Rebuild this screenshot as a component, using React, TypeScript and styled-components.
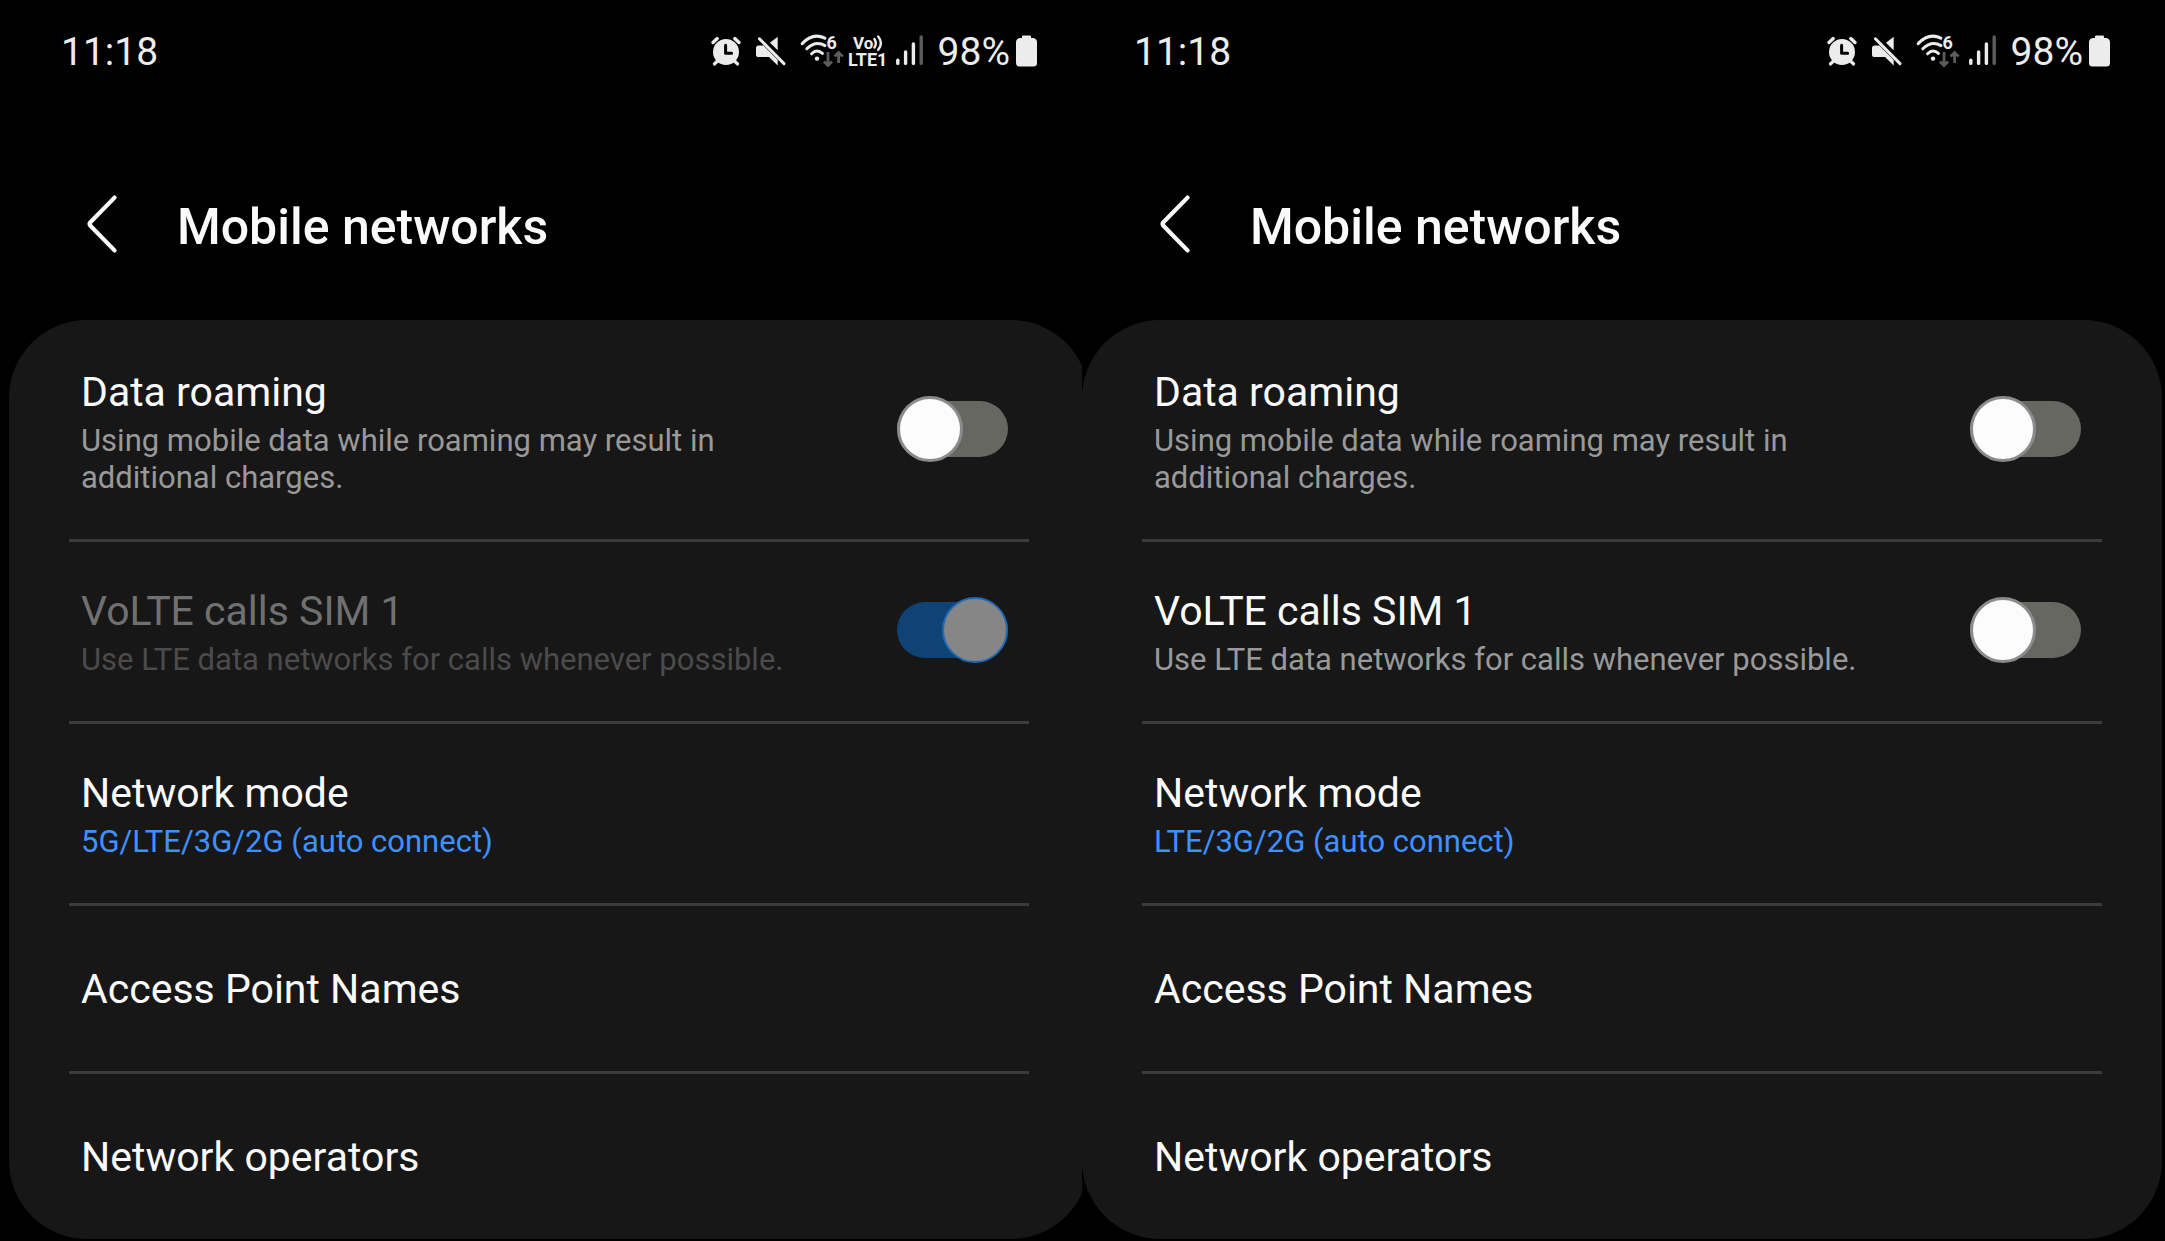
import React, { useId, useState } from "react";
import styled, { createGlobalStyle, css } from "styled-components";

const GlobalStyle = createGlobalStyle`
  *, *::before, *::after { box-sizing: border-box; }
  body { margin: 0; background: #000; }
`;

const Page = styled.div`
  display: flex;
  padding: 0 3px 2px 9px;
  background: #000;
  color: #fafafa;
  font-family: Roboto, "Liberation Sans", sans-serif;
`;

const PhoneFrame = styled.main`
  flex: 1 1 0;
  min-width: 0;
  background: #000;

  & + & {
    margin-left: -7px;
  }
`;

const StatusBar = styled.header`
  display: flex;
  align-items: center;
  justify-content: space-between;
  height: 102px;
  padding: 0 52px;
  color: #ececec;
  font-size: 39px;
  line-height: 48px;
`;

const Clock = styled.time`
  padding-top: 2px;
`;

const StatusIcons = styled.div`
  display: flex;
  align-items: center;

  svg {
    display: block;
    overflow: visible;
  }
`;

const IconSlot = styled.span<{ $gap: number }>`
  margin-right: ${(p) => p.$gap}px;
`;

const BatteryLevel = styled.span`
  padding-top: 2px;
  margin-right: 6px;
`;

const TitleBar = styled.div`
  display: flex;
  align-items: center;
  height: 218px;
  padding: 25px 72px 0;
`;

const BackButton = styled.button`
  display: flex;
  justify-content: center;
  width: 42px;
  margin-right: 54px;
  padding: 0;
  border: 0;
  background: none;
  color: inherit;
  cursor: pointer;
`;

const Title = styled.h1`
  margin: 0;
  padding-top: 6px;
  font-size: 50px;
  font-weight: 500;
  line-height: 60px;
`;

const Card = styled.ul`
  margin: 0;
  padding: 3px 60px 0;
  list-style: none;
  background: #171717;
  border-radius: 78px;
`;

const Item = styled.li`
  & + & {
    border-top: 3px solid #3b3b3b;
  }
`;

const rowStyle = css`
  display: flex;
  align-items: center;
  justify-content: space-between;
  width: 100%;
  padding: 39px 21px 43px 12px;
  text-align: left;
`;

const ToggleLabel = styled.label`
  ${rowStyle}
`;

const LinkRow = styled.button<{ $single?: boolean }>`
  ${rowStyle}
  ${(p) => p.$single && "padding-top: 53px; padding-bottom: 52px;"}
  border: 0;
  background: none;
  color: inherit;
  font-family: inherit;
  cursor: pointer;
`;

const Texts = styled.span`
  display: block;
  max-width: 740px;
`;

const ItemTitle = styled.span<{ $dim?: boolean }>`
  display: block;
  color: ${(p) => (p.$dim ? "#707070" : "#fafafa")};
  font-size: 41px;
  line-height: 60px;
`;

const ItemNote = styled.span<{ $tone?: "dim" | "accent" }>`
  display: block;
  color: ${(p) => (p.$tone === "accent" ? "#3e91ff" : p.$tone === "dim" ? "#4b4b4b" : "#999")};
  font-size: 31px;
  line-height: 37px;
`;

const Switch = styled.input`
  appearance: none;
  position: relative;
  flex: none;
  width: 111px;
  height: 66px;
  margin: 0;

  &::before {
    content: "";
    position: absolute;
    inset: 5px 0;
    border-radius: 28px;
    background: #666760;
  }

  &::after {
    content: "";
    position: absolute;
    top: 0;
    left: 0;
    width: 66px;
    height: 66px;
    border: 3px solid #8b8b8b;
    border-radius: 50%;
    background: #fcfcfc;
  }

  &:checked::before { background: #0381fe; }
  &:checked::after { left: 45px; border-color: #0381fe; }

  &:disabled::before { background: #0f4376; }
  &:disabled::after { border: 2px solid #2069b5; background: #868686; }
`;

const AlarmIcon = () => (
  <svg width="30" height="30" viewBox="0 0 30 30" aria-label="Alarm" role="img">
    <circle cx="15" cy="16" r="13" fill="currentColor" />
    <path d="M2 6.5 6.2 2.6M28 6.5 23.8 2.6" stroke="currentColor" strokeWidth="3.4" strokeLinecap="round" />
    <path d="M6.5 25 3.4 28M23.5 25 26.6 28" stroke="currentColor" strokeWidth="3.2" strokeLinecap="round" />
    <path d="M14.6 9.3v8h6" fill="none" stroke="#000" strokeWidth="3" strokeLinecap="round" strokeLinejoin="round" />
  </svg>
);

const MuteIcon = () => (
  <svg width="30" height="30" viewBox="0 0 30 30" aria-label="Muted" role="img">
    <path d="M2.6 9.6H7.4L21.7 24v5.4L13 21H2.6Q0 21 0 18.4v-6.2Q0 9.6 2.6 9.6Z" fill="currentColor" />
    <path d="M21.7 .8v13.4L14 6.8Z" fill="currentColor" />
    <path d="M3.4 2.8 28 27.6" stroke="currentColor" strokeWidth="3" strokeLinecap="round" />
  </svg>
);

const WifiIcon = () => (
  <svg width="44" height="34" viewBox="0 0 44 34" aria-label="Wi-Fi 6" role="img">
    <g fill="none" stroke="currentColor" strokeWidth="3" strokeLinecap="round">
      <path d="M2.2 9.6Q13-1.8 24.8 4.2" />
      <path d="M6.8 14.8Q15.6 6 25 11.6" />
      <path d="M11.6 19.8Q17 14.4 22.4 19.4" />
    </g>
    <circle cx="17" cy="24.6" r="2.2" fill="currentColor" />
    <text x="26.4" y="15" fontSize="18" fontWeight="700" fill="currentColor">6</text>
    <path d="M28 18v13M24 27.6l4 4 4-4M38.6 29V18.6M34.6 22.4l4-4 4 4" fill="none" stroke="#5c5c5c" strokeWidth="2.8" />
  </svg>
);

const VolteIcon = () => (
  <svg width="38" height="34" viewBox="0 0 38 34" aria-label="VoLTE 1" role="img">
    <text x="4" y="15" fontSize="17" fontWeight="700" fill="currentColor">Vo</text>
    <path d="M25.4 5Q28.2 9.2 25.4 13.6M29.2 2.4Q34.6 8.8 29.2 15.8" fill="none" stroke="currentColor" strokeWidth="2.4" strokeLinecap="round" />
    <text x="-1" y="32" fontSize="18" fontWeight="700" fill="currentColor">LTE1</text>
  </svg>
);

const SignalIcon = () => (
  <svg width="27" height="34" viewBox="0 0 27 34" aria-label="Signal" role="img">
    <g fill="none" stroke="currentColor" strokeWidth="3.4" strokeLinecap="round">
      <path d="M1.8 26.2v3.2" />
      <path d="M9.6 18v11.4" />
      <path d="M17.4 10v19.4" />
      <path d="M25.2 3v26.4" stroke="#5c5c5c" />
    </g>
  </svg>
);

const BatteryIcon = () => (
  <svg width="21" height="32" viewBox="0 0 21 32" aria-label="Battery" role="img">
    <path d="M6 3V1.6Q6 .4 7.2 .4h6.6Q15 .4 15 1.6V3h2.6Q21 4 21 7v21q0 3.6-3.6 3.6H3.6Q0 31.6 0 28V7Q0 4 3.4 3Z" fill="currentColor" />
  </svg>
);

const BackIcon = () => (
  <svg width="30" height="58" viewBox="0 0 30 58" aria-hidden="true">
    <path d="M27.5 2.6 3.4 27.2Q1.8 29 3.4 30.8L27.5 55.4" fill="none" stroke="currentColor" strokeWidth="4.2" strokeLinecap="round" />
  </svg>
);

type ToggleProps = { title: string; note: string; on?: boolean; disabled?: boolean };

function ToggleItem({ title, note, on = false, disabled = false }: ToggleProps) {
  const id = useId();
  const [checked, setChecked] = useState(on);
  return (
    <Item>
      <ToggleLabel htmlFor={id}>
        <Texts>
          <ItemTitle $dim={disabled}>{title}</ItemTitle>
          <ItemNote $tone={disabled ? "dim" : undefined}>{note}</ItemNote>
        </Texts>
        <Switch
          id={id}
          type="checkbox"
          role="switch"
          checked={checked}
          disabled={disabled}
          onChange={(e) => setChecked(e.target.checked)}
        />
      </ToggleLabel>
    </Item>
  );
}

type PhoneProps = { mode: string; volte: boolean };

function Phone({ mode, volte }: PhoneProps) {
  return (
    <PhoneFrame>
      <StatusBar>
        <Clock>11:18</Clock>
        <StatusIcons>
          <IconSlot $gap={15}><AlarmIcon /></IconSlot>
          <IconSlot $gap={14}><MuteIcon /></IconSlot>
          <IconSlot $gap={volte ? 5 : 9}><WifiIcon /></IconSlot>
          {volte && <IconSlot $gap={9}><VolteIcon /></IconSlot>}
          <IconSlot $gap={15}><SignalIcon /></IconSlot>
          <BatteryLevel>98%</BatteryLevel>
          <BatteryIcon />
        </StatusIcons>
      </StatusBar>
      <TitleBar>
        <BackButton type="button" aria-label="Back"><BackIcon /></BackButton>
        <Title>Mobile networks</Title>
      </TitleBar>
      <Card>
        <ToggleItem
          title="Data roaming"
          note="Using mobile data while roaming may result in additional charges."
        />
        <ToggleItem
          title="VoLTE calls SIM 1"
          note="Use LTE data networks for calls whenever possible."
          on={volte}
          disabled={volte}
        />
        <Item>
          <LinkRow type="button">
            <Texts>
              <ItemTitle>Network mode</ItemTitle>
              <ItemNote $tone="accent">{mode}</ItemNote>
            </Texts>
          </LinkRow>
        </Item>
        <Item>
          <LinkRow type="button" $single><ItemTitle>Access Point Names</ItemTitle></LinkRow>
        </Item>
        <Item>
          <LinkRow type="button" $single><ItemTitle>Network operators</ItemTitle></LinkRow>
        </Item>
      </Card>
    </PhoneFrame>
  );
}

export default function App() {
  return (
    <>
      <GlobalStyle />
      <Page>
        <Phone mode="5G/LTE/3G/2G (auto connect)" volte />
        <Phone mode="LTE/3G/2G (auto connect)" volte={false} />
      </Page>
    </>
  );
}
